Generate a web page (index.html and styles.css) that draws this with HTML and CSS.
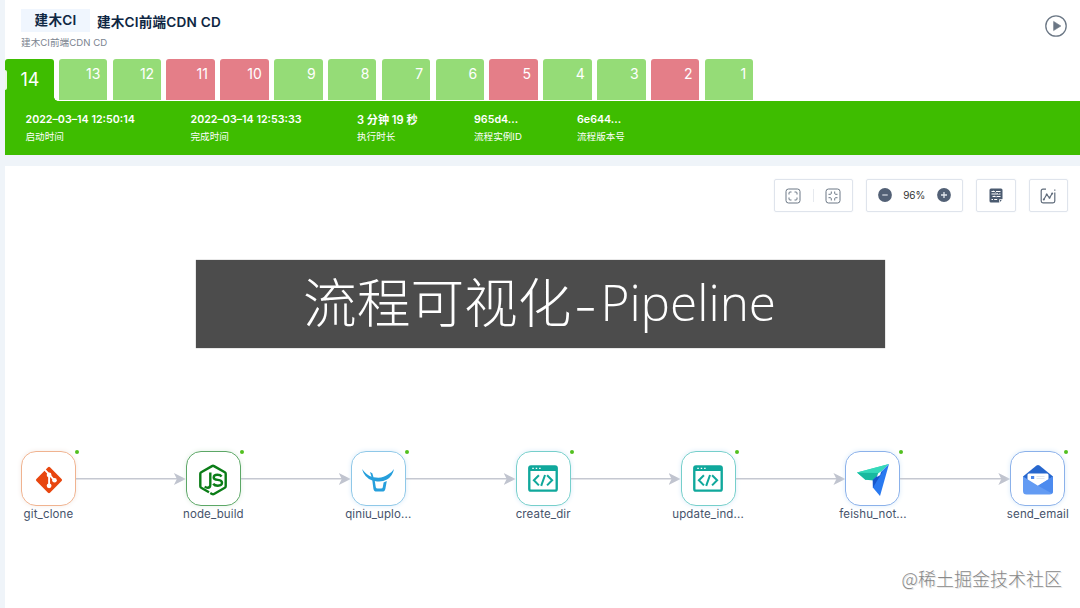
FILE: index.html
```html
<!DOCTYPE html>
<html lang="zh-CN">
<head>
<meta charset="utf-8">
<title>建木CI</title>
<link rel="stylesheet" href="styles.css">
</head>
<body>
<svg class="defs" width="0" height="0">
  <symbol id="code" viewBox="0 0 28 25">
    <rect x="1.200" y="1.200" width="25.600" height="22.600" rx="1.600" fill="none" stroke="#10a89c" stroke-width="2.200"/>
    <path d="M1 1h26v4.500H1z" fill="#10a89c"/>
    <path d="M4 3h1.400M7.200 3h1.400M10.400 3h1.400" stroke="#fff" stroke-width="1.300"/>
    <path d="M10.200 9.500l-4.700 4.700 4.700 4.700M17.800 9.500l4.700 4.700-4.700 4.700M15.900 9.200l-3.600 10.200" fill="none" stroke="#10a89c" stroke-width="1.900"/>
  </symbol>
</svg>
<main class="app">
  <header class="head">
    <div class="titles">
      <h1 class="title"><span class="group">建木CI</span><span class="name">建木CI前端CDN CD</span></h1>
      <p class="desc">建木CI前端CDN CD</p>
    </div>
    <svg class="play" viewBox="0 0 22 22"><circle cx="11" cy="11" r="10.200" fill="none" stroke="#6b7785" stroke-width="1.300"/><path d="M8.600 6.400v9.200l7.300-4.600z" fill="#6b7785" stroke="#6b7785" stroke-width=".6" stroke-linejoin="round"/></svg>
  </header>
  <nav class="tabs">
    <a class="tab current">14</a><a class="tab ok">13</a><a class="tab ok">12</a><a class="tab bad">11</a><a class="tab bad">10</a><a class="tab ok">9</a><a class="tab ok">8</a><a class="tab ok">7</a><a class="tab ok">6</a><a class="tab bad">5</a><a class="tab ok">4</a><a class="tab ok">3</a><a class="tab bad">2</a><a class="tab ok">1</a>
  </nav>
  <section class="info">
    <div class="item"><b>2022–03–14 12:50:14</b><span>启动时间</span></div>
    <div class="item"><b>2022–03–14 12:53:33</b><span>完成时间</span></div>
    <div class="item"><b class="wide">3 分钟 19 秒</b><span>执行时长</span></div>
    <div class="item"><b>965d4...</b><span>流程实例ID</span></div>
    <div class="item"><b>6e644...</b><span>流程版本号</span></div>
  </section>
  <section class="canvas">
    <div class="tools">
      <div class="tool fit">
        <svg width="16" height="16" viewBox="0 0 16 16" fill="none" stroke="#6b7785"><rect x="1" y="1" width="14" height="14" rx="2.500"/><path d="M4 6.500V5q0-1 1-1h1.500M9.500 4H11q1 0 1 1v1.500M12 9.500V11q0 1-1 1H9.500M6.500 12H5q-1 0-1-1V9.500"/></svg>
        <i class="sep"></i>
        <svg width="16" height="16" viewBox="0 0 16 16" fill="none" stroke="#6b7785"><rect x="1" y="1" width="14" height="14" rx="2.500"/><path d="M6.300 3.500v1.800q0 1-1 1H3.500M9.700 3.500v1.800q0 1 1 1h1.800M12.500 9.700h-1.800q-1 0-1 1v1.800M6.300 12.500v-1.800q0-1-1-1H3.500"/></svg>
      </div>
      <div class="tool zoom">
        <svg width="14" height="14" viewBox="0 0 14 14"><circle cx="7" cy="7" r="6.900" fill="#526075"/><path d="M4.300 7h5.400" stroke="#d8dde5" stroke-width="1.200"/></svg>
        <span>96%</span>
        <svg width="14" height="14" viewBox="0 0 14 14"><circle cx="7" cy="7" r="6.900" fill="#526075"/><path d="M4 7h6M7 4v6" stroke="#e4e8ee" stroke-width="1.300"/></svg>
      </div>
      <div class="tool">
        <svg width="14" height="15" viewBox="0 0 14 15"><path d="M2 .5h10q1.500 0 1.500 1.500v9l-3.200 3.500H2Q.5 14.500.5 13V2Q.5.5 2 .5z" fill="#4b5b70"/><path d="M2.500 3.500h3M7 3.500h4.500M2.500 6h6M10 6h1.500M3.500 8.500H6M7.500 8.500h4M2.500 11.500H4M5.200 11.500h3" stroke="#fff"/><path d="M4.500 2.600l2 2M8 5l1.500 2M5.500 7.700l1.500 1.500" stroke="#fff" stroke-width=".8"/><path d="M13.500 11v3.500h-3.300V12q0-1 1-1z" fill="#fff"/><path d="M11 11.800h2l-2 2.200z" fill="#4b5b70"/></svg>
      </div>
      <div class="tool">
        <svg width="16" height="16" viewBox="0 0 16 16" fill="none" stroke="#5f6b7a" stroke-width="1.200"><path d="M6 1.200H3Q1.200 1.200 1.200 3v10q0 1.800 1.800 1.800h10q1.800 0 1.800-1.800V4.500M14.800 1.500v1.200"/><path d="M3.800 11.500l2.900-5 2.900 3.300 2.600-4.300"/><g fill="#5f6b7a" stroke="none"><circle cx="3.800" cy="11.500" r="1"/><circle cx="6.700" cy="6.600" r="1"/><circle cx="9.500" cy="9.800" r="1"/><circle cx="12.200" cy="5.500" r="1"/></g></svg>
      </div>
    </div>
    <div class="flow">
      <div class="node git"><div class="box"><svg width="28" height="28" viewBox="0 0 28 28"><path d="M13 1.300q1-.9 2 0L26.600 13q1 1 0 2L15 26.700q-1 .9-2 0L1.400 15q-1-1 0-2z" fill="#e8460f"/><g stroke="#fff" stroke-width="1.900" fill="none"><path d="M9.500 3.300l4.600 5v11.200M14.100 8.300l5.300 6"/></g><circle cx="14.100" cy="9" r="2.400" fill="#fff"/><circle cx="14.100" cy="19.800" r="2.400" fill="#fff"/><circle cx="19.500" cy="14.200" r="2.300" fill="#fff"/></svg></div><p>git_clone</p></div>
      <i class="edge"></i>
      <div class="node js"><div class="box"><svg width="28" height="32" viewBox="0 0 28 32" fill="none" stroke="#0b7d17" stroke-width="2.400"><path d="M10 28.300L2.200 23.800q-.9-.5-.9-1.500V9.800q0-1 .9-1.500L13 2.100q1-.6 2 0l10.800 6.200q.9.500.9 1.500v12.500q0 1-.9 1.500L15 30q-1 .6-2 0l-1.700-1"/><path d="M11.300 8.600v12.200q0 3-2.500 3-1.700 0-3-1.300M22.600 12.500q-1.300-1.700-4.100-1.700-3.800 0-3.800 2.600 0 2 4.100 2.500 4.200.5 4.200 2.900 0 2.900-4.200 2.900-3.200 0-4.600-2"/></svg></div><p>node_build</p></div>
      <i class="edge"></i>
      <div class="node qiniu"><div class="box"><svg width="34" height="26" viewBox="0 0 34 26"><path d="M1 2q5 6.500 9.500 7.800L9 5l2.300 1.200 1.200 4q9 1.700 14.400-2.600Q31 5.300 33 2q-1.400 7.300-7 10.400-6 3.300-12.200 1.500l1 6.300q.3 1.300 1.800 1.300h3.500q1.500 0 1.700-1.300l.8-4.700 3.200-1.500-1.400 7.700q-.5 2.900-3.300 2.900h-5.500q-2.700 0-3.200-2.900L11.300 13.400Q3.500 11 1 2z" fill="#269fdc"/></svg></div><p>qiniu_uplo...</p></div>
      <i class="edge"></i>
      <div class="node code"><div class="box"><svg width="30" height="27"><use href="#code"/></svg></div><p>create_dir</p></div>
      <i class="edge"></i>
      <div class="node code"><div class="box"><svg width="30" height="27"><use href="#code"/></svg></div><p>update_ind...</p></div>
      <i class="edge"></i>
      <div class="node feishu"><div class="box"><svg width="34" height="34" viewBox="0 0 34 34"><path d="M1 9.500L33 1 21 12.500 9.500 17z" fill="#35d9ba"/><path d="M1 9.500L23 10l-5 7.500-8.500-.7z" fill="#18b99f"/><path d="M1 9.500L33 1 21 9.500z" fill="#35d9ba"/><path d="M33 1l-9 32-7.200-8.500V17z" fill="#2979f0"/><path d="M16.800 17L27 8 17 24.500z" fill="#1557cc"/><path d="M22 10.500l3-2-.8 3.500-3.200 1.900z" fill="#fff"/></svg></div><p>feishu_not...</p></div>
      <i class="edge"></i>
      <div class="node mail"><div class="box"><svg width="32" height="31" viewBox="0 0 32 31"><path d="M1 12.500L14.500 1.600q1.500-1.200 3 0L31 12.500v5H1z" fill="#2767ce"/><path d="M5.500 11q0-1.500 1.500-1.500h18q1.500 0 1.500 1.500v9L16 25 5.500 18z" fill="#fff"/><rect x="9" y="12" width="3.200" height="3" fill="#4c88eb"/><path d="M14.500 12.500h8M14.500 14.500h8" stroke="#dbe1ea" stroke-width=".8"/><path d="M1 12.500l15 9.300 15-9.300V27q0 3.500-3.500 3.500h-23Q1 30.500 1 27z" fill="#639bf3"/><path d="M16 21.800l15-9.300V27q0 1.500-1 2.500z" fill="#4d8bef"/></svg></div><p>send_email</p></div>
    </div>
    <p class="mark">@稀土掘金技术社区</p>
  </section>
</main>
<div class="caption"><span class="zh">流程可视化</span><span class="dash">-</span><span class="en">Pipeline</span></div>
</body>
</html>
```
FILE: styles.css
```css
* { box-sizing: border-box; }
body {
  margin: 0;
  width: 1080px;
  height: 608px;
  overflow: hidden;
  background: #eff4f9;
  font-family: Inter, "Noto Sans CJK SC", sans-serif;
  color: #0f2743;
}
h1, p { margin: 0; }
svg { display: block; flex: none; }
.defs { position: absolute; }
.app { height: 608px; padding-left: 5px; display: flex; flex-direction: column; }

.head { height: 59px; flex: none; background: #fff; display: flex; justify-content: space-between; padding: 9px 13px 0 16px; }
.title { display: flex; align-items: center; height: 23px; font-size: 13.600px; letter-spacing: .2px; font-weight: 600; white-space: nowrap; }
.group { background: #f0f6fe; width: 69px; line-height: 23px; text-align: center; margin-right: 7px; }
.desc { font-size: 9.600px; letter-spacing: .05px; line-height: 14px; margin-top: 4px; color: #7b8490; white-space: nowrap; }
.play { width: 22px; height: 22px; margin-top: 6px; }

.tabs { height: 42px; flex: none; background: #fff; display: flex; gap: 5.340px; }
.tab { width: 48.500px; height: 41px; border-radius: 3px 3px 0 0; color: #fff; font-size: 14px; line-height: 30px; text-align: right; padding-right: 7px; }
.ok { background: #95dc77; }
.bad { background: #e47e88; }
.current { position: relative; height: 42px; background: #3ebd00; font-size: 18px; line-height: 42px; padding-right: 14px; }
.current::before { content: ""; position: absolute; left: 0; top: 11px; width: 2px; height: 20px; background: #eaf7e4; border-radius: 0 2px 2px 0; }
.current::after { content: ""; position: absolute; left: 48.500px; bottom: 0; width: 4px; height: 4px; background: radial-gradient(circle at 100% 0, #fff 3.500px, #3ebd00 4px); }

.info { height: 53.500px; flex: none; background: #3ebd00; color: #fff; padding: 11px 0 0 20.500px; display: grid; grid-template-columns: 165px 166.500px 117px 103px 100px; white-space: nowrap; }
.item { display: flex; flex-direction: column; }
.item b { font-size: 10.700px; font-weight: 600; line-height: 16px; }
.item .wide { font-size: 11.100px; }
.item span { font-size: 9.600px; line-height: 14px; margin-top: 2px; }

.canvas { flex: 1; margin-top: 11.500px; background: #fff; display: flex; flex-direction: column; padding-top: 13px; }
.tools { display: flex; justify-content: flex-end; gap: 13px; padding-right: 12px; height: 33px; }
.tool { width: 39.500px; border: 1px solid #dfe4ec; border-radius: 2px; display: flex; align-items: center; justify-content: center; box-shadow: 0 0 2px #eef1f6; }
.fit { width: 79px; gap: 11.300px; }
.sep { width: 1px; height: 13px; background: #e6e9ee; }
.zoom { width: 97.500px; gap: 11.500px; font-size: 10px; color: #333; padding-bottom: 1px; }

.flow { display: flex; margin: 239px 0 0 16px; height: 72px; }
.node { position: relative; width: 55px; flex: none; }
.node::after { content: ""; position: absolute; left: 54px; top: -1px; width: 4px; height: 4px; border-radius: 50%; background: #52c01f; }
.box { width: 55px; height: 55px; border: 1px solid #8fc8e8; border-radius: 15px; display: flex; align-items: center; justify-content: center; box-shadow: 0 0 5px #dcecf9; padding-top: 2px; }
.node p { font-size: 11.500px; letter-spacing: .13px; line-height: 16px; color: #46536b; width: 99px; margin-left: -22px; text-align: center; }
.git .box { border-color: #f0b390; box-shadow: 0 0 5px #f3ece8; }
.js .box { border-color: #5ca766; box-shadow: 0 0 5px #e2efe4; }
.code .box { border-color: #76cfcb; padding-top: 0; }
.feishu .box, .mail .box { border-color: #8bb1ea; }
.edge { position: relative; width: 109.900px; flex: none; height: 55px; background: linear-gradient(#c5c8d1, #c5c8d1) 0 27px / 103px 1.500px no-repeat; }
.edge::after { content: ""; position: absolute; right: 0; top: 22px; width: 12px; height: 12px; background: #c0c4cf; clip-path: polygon(0 0, 100% 50%, 0 100%, 25% 50%); }

.mark { align-self: flex-end; margin: 42px 18px 0 0; font-size: 18px; line-height: 26px; font-weight: 300; color: #888; white-space: nowrap; font-family: "Noto Sans CJK SC", sans-serif; text-shadow: 1px 1px 0 #e5e5e5; }

.caption { position: absolute; left: 195.500px; top: 260px; width: 689px; height: 88px; background: #4c4c4c; box-shadow: 0 0 1px #777; color: #fff; display: flex; padding-left: 107.500px; white-space: nowrap; font-weight: 300; font-size: 53.700px; line-height: 80px; font-family: "Noto Sans CJK SC", sans-serif; }
.zh { font-weight: 200; }
.dash { width: 29px; text-align: center; line-height: 82px; transform: scaleX(1.25); }
.en { font-family: "Open Sans", "Noto Sans", sans-serif; font-size: 49.500px; line-height: 85px; }
```
